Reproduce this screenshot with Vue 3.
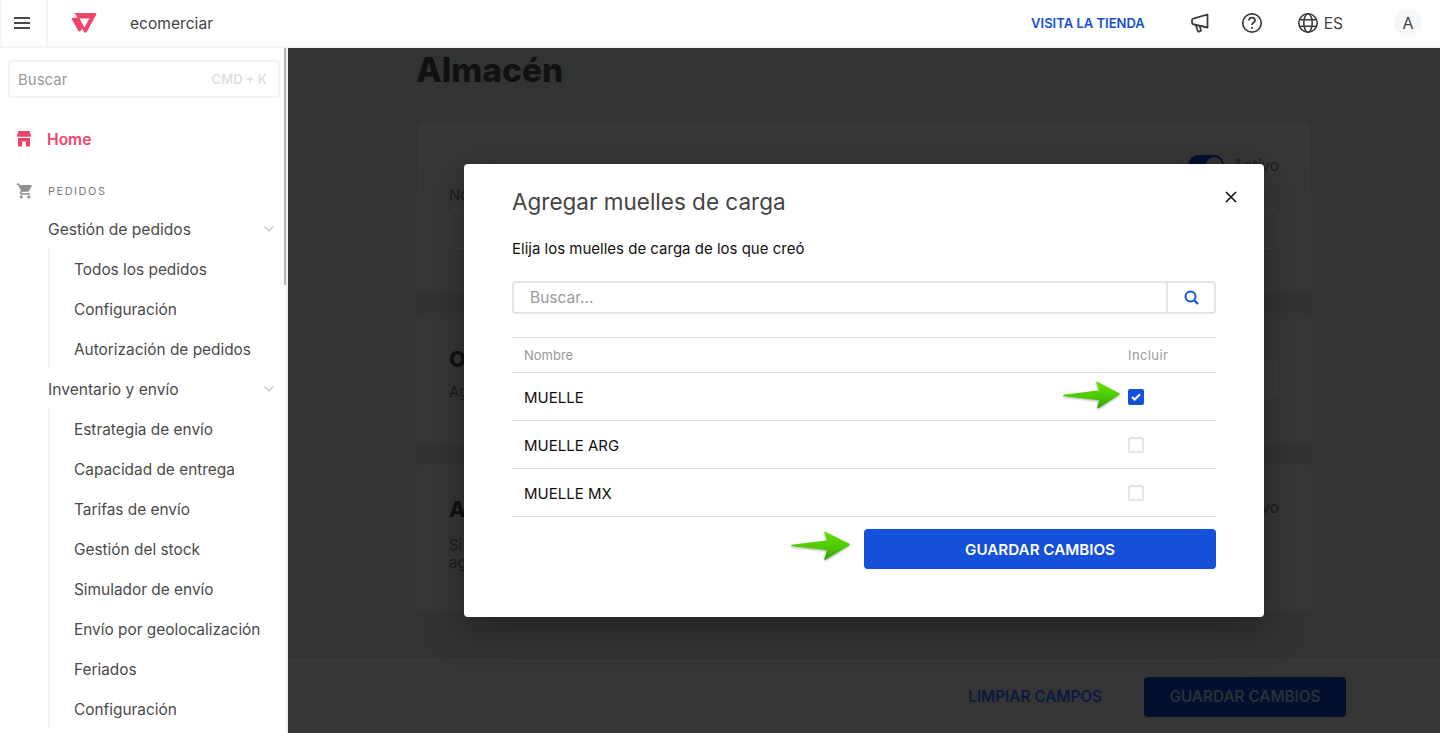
<script setup>
const gestion = ['Todos los pedidos', 'Configuración', 'Autorización de pedidos']
const inventario = ['Estrategia de envío', 'Capacidad de entrega', 'Tarifas de envío', 'Gestión del stock', 'Simulador de envío', 'Envío por geolocalización', 'Feriados', 'Configuración']
const rows = [
  { name: 'MUELLE', checked: true },
  { name: 'MUELLE ARG', checked: false },
  { name: 'MUELLE MX', checked: false }
]
</script>

<template>
  <div class="app">
    <header class="topbar">
      <div class="burger">
        <svg width="18" height="14" viewBox="0 0 18 14"><path d="M1 2h16M1 7h16M1 12h16" stroke="#4a4a4a" stroke-width="2" fill="none" /></svg>
      </div>
      <svg class="logo" width="26" height="22" viewBox="0 0 26 22">
        <path fill="#f0456a" fill-rule="evenodd" d="M3.500 1h20.800c.9 0 1.400.8 1 1.600L15.700 20c-.6 1.100-2 1.100-2.600 0L11 16.400l-1.300 2.300c-.6 1-1.900 1-2.500 0L1 7.600c-.5-.9.100-1.800 1-1.800h4.500L3.500 1zM8.500 6.500 13.500 15.500 18.300 6.500z" />
      </svg>
      <span class="brand">ecomerciar</span>
      <span class="spacer"></span>
      <a class="visit">VISITA LA TIENDA</a>
      <svg class="i-mega" width="18" height="20" viewBox="0 0 18 20" fill="none" stroke="#3c3c3c" stroke-width="1.800" stroke-linejoin="round">
        <path d="M1 7C1 6 2 5.500 3 5.300L16.500 1.500V14.500L3 11.500C2 11.300 1 10.500 1 9.500z" />
        <path d="M5 12l1.500 5.500c.3 1 1.200 1.300 2 .9l1.500-.8-1.300-4.500" />
      </svg>
      <svg class="i-help" width="22" height="22" viewBox="0 0 22 22" fill="none" stroke="#3c3c3c">
        <circle cx="11" cy="11" r="9.200" stroke-width="1.700" />
        <path d="M8 8.600c0-1.800 1.400-2.900 3-2.900s3 1.100 3 2.700c0 2.300-3 2.400-3 4.600" stroke-width="1.800" />
        <path d="M11 15v1.800" stroke-width="1.900" />
      </svg>
      <svg class="i-globe" width="22" height="22" viewBox="0 0 22 22" fill="none" stroke="#3c3c3c" stroke-width="1.600">
        <circle cx="11" cy="11" r="9.200" />
        <ellipse cx="11" cy="11" rx="4.200" ry="9.200" />
        <path d="M2.300 7.800h17.400M2.300 14.200h17.400" />
      </svg>
      <span class="lang">ES</span>
      <span class="avatar">A</span>
    </header>

    <div class="body">
      <aside class="sidebar">
        <div class="search">
          <span>Buscar</span>
          <span class="kbd">CMD + K</span>
        </div>
        <div class="home">
          <svg width="16" height="16" viewBox="0 0 16 16"><path fill="#f0456a" d="M2.500 0h11l1.500 4.500v1.300H1V4.500zM2 7h12v8.500H9.800V10.500H6.200v5H2z" /></svg>
          <span>Home</span>
        </div>
        <div class="section">
          <svg width="18" height="18" viewBox="0 0 24 24"><path fill="#8f8f8f" d="M7 18c-1.100 0-1.990.9-1.990 2S5.900 22 7 22s2-.9 2-2-.9-2-2-2zM1 2v2h2l3.600 7.590-1.350 2.450c-.16.28-.25.61-.25.96 0 1.100.9 2 2 2h12v-2H7.420c-.14 0-.25-.11-.25-.25l.03-.12.9-1.630h7.450c.75 0 1.410-.41 1.750-1.030l3.580-6.490c.08-.14.12-.31.12-.48 0-.55-.45-1-1-1H5.210l-.94-2H1zm16 16c-1.100 0-1.990.9-1.990 2s.89 2 1.990 2 2-.9 2-2-.9-2-2-2z" /></svg>
          <span>PEDIDOS</span>
        </div>
        <div class="group">
          <span>Gestión de pedidos</span>
          <svg width="12" height="8" viewBox="0 0 12 8"><path d="M1.500 1.500 6 6l4.500-4.500" stroke="#c9c9c9" stroke-width="1.500" fill="none" /></svg>
        </div>
        <ul class="sub">
          <li v-for="item in gestion" :key="item">{{ item }}</li>
        </ul>
        <div class="group">
          <span>Inventario y envío</span>
          <svg width="12" height="8" viewBox="0 0 12 8"><path d="M1.500 1.500 6 6l4.500-4.500" stroke="#c9c9c9" stroke-width="1.500" fill="none" /></svg>
        </div>
        <ul class="sub">
          <li v-for="item in inventario" :key="item">{{ item }}</li>
        </ul>
        <span class="thumb"></span>
      </aside>

      <main class="main">
        <div class="content">
          <h1>Almacén</h1>
          <section class="card card-a">
            <div class="switch-row">
              <span class="switch"><i></i></span>
              <span>Activo</span>
            </div>
            <label>No</label>
            <div class="field"></div>
          </section>
          <section class="card card-b">
            <h2>O</h2>
            <p>Ag</p>
            <span class="ghost"></span>
          </section>
          <section class="card card-c">
            <div class="card-c-head">
              <h2>A</h2>
              <span class="tail">Activo</span>
            </div>
            <p>Si<br />ag</p>
          </section>
        </div>
        <footer class="footer">
          <a>LIMPIAR CAMPOS</a>
          <button>GUARDAR CAMBIOS</button>
        </footer>

        <div class="modal-layer">
          <div class="modal">
            <div class="modal-head">
              <h3>Agregar muelles de carga</h3>
              <svg width="12" height="12" viewBox="0 0 12 12"><path d="M1 1l10 10M11 1 1 11" stroke="#111" stroke-width="1.600" /></svg>
            </div>
            <p class="lead">Elija los muelles de carga de los que creó</p>
            <div class="finder">
              <span class="finder-text">Buscar...</span>
              <span class="finder-btn">
                <svg width="15" height="15" viewBox="0 0 15 15" fill="none" stroke="#1450d8"><circle cx="6.500" cy="6.500" r="5" stroke-width="1.900" /><path d="M10.500 10.500 14 14" stroke-width="2.200" /></svg>
              </span>
            </div>
            <div class="table">
              <div class="thead">
                <span>Nombre</span>
                <span class="col-inc">Incluir</span>
              </div>
              <div v-for="r in rows" :key="r.name" class="row">
                <span>{{ r.name }}</span>
                <span class="col-box">
                  <span :class="['box', { on: r.checked }]">
                    <svg v-if="r.checked" width="10" height="8" viewBox="0 0 10 8"><path d="M1 4l2.700 2.500L9 1.300" stroke="#fff" stroke-width="2" fill="none" /></svg>
                  </span>
                </span>
              </div>
            </div>
            <div class="actions">
              <button>GUARDAR CAMBIOS</button>
            </div>
          </div>
        </div>

        <svg class="arrow arrow-a" width="62" height="36" viewBox="0 0 62 36">
          <defs>
            <linearGradient id="gr" x1="0" y1="0" x2="0" y2="1">
              <stop offset="0" stop-color="#62e002" />
              <stop offset="0.6" stop-color="#4cc804" />
              <stop offset="1" stop-color="#3a9a0a" />
            </linearGradient>
            <filter id="sh" x="-20%" y="-20%" width="140%" height="150%">
              <feDropShadow dx="0" dy="1" stdDeviation="0.800" flood-color="#000" flood-opacity="0.350" />
            </filter>
          </defs>
          <path fill="url(#gr)" filter="url(#sh)" stroke="url(#gr)" stroke-width="1.500" stroke-linejoin="round" d="M2 17.500 38 13 35 4.500 57 16 36 29.500 38 21.500z" />
        </svg>
        <svg class="arrow arrow-b" width="62" height="36" viewBox="0 0 62 36">
          <path fill="url(#gr)" filter="url(#sh)" stroke="url(#gr)" stroke-width="1.500" stroke-linejoin="round" d="M2 17.500 38 13 35 4.500 59 16.500 35 31 38 21.500z" />
        </svg>
      </main>
    </div>
  </div>
</template>

<style>
html, body { margin: 0; padding: 0; overflow: hidden; }
</style>

<style scoped>
* { box-sizing: border-box; }
.app {
  width: 1440px;
  height: 733px;
  overflow: hidden;
  font-family: Inter, "Liberation Sans", sans-serif;
  font-size: 15.600px;
  color: #4a4a4a;
  background: #fff;
  display: flex;
  flex-direction: column;
}
.topbar {
  height: 48px;
  flex: none;
  display: flex;
  align-items: center;
  background: #fff;
  border-bottom: 2px solid #f4f4f4;
}
.burger {
  width: 48px;
  height: 46px;
  border-left: 2px solid #f6f6f6;
  border-right: 2px solid #f4f4f4;
  display: flex;
  align-items: center;
  justify-content: center;
  padding-right: 4px;
}
.logo { margin-left: 23px; }
.brand { margin-left: 33px; color: #444; font-size: 15.600px; }
.spacer { flex: 1; }
.visit { color: #1450d8; font-size: 13px; font-weight: 600; }
.i-mega { margin-left: 46px; }
.i-help { margin-left: 32px; }
.i-globe { margin-left: 34px; }
.lang { margin-left: 5px; color: #444; font-size: 15.500px; }
.avatar {
  width: 28px;
  height: 28px;
  margin: 0 18px 0 51px;
  border-radius: 50%;
  background: #f6f7f9;
  color: #444;
  font-size: 16px;
  display: flex;
  align-items: center;
  justify-content: center;
}
.body { flex: 1; display: flex; min-height: 0; }
.sidebar {
  position: relative;
  width: 288px;
  flex: none;
  overflow: hidden;
  background: #fff;
  padding: 12px 8px 0;
  border-right: 2px solid #eee;
}
.thumb {
  position: absolute;
  right: 0;
  top: 0;
  width: 2px;
  height: 237px;
  background: #b5b5b5;
}
.search {
  height: 38px;
  width: 272px;
  border: 2px solid #f3f3f3;
  border-radius: 4px;
  display: flex;
  align-items: center;
  justify-content: space-between;
  padding: 0 11px 0 8px;
  color: #9a9a9a;
  font-size: 15px;
}
.kbd { color: #dfdfdf; font-size: 13px; font-weight: 600; }
.home {
  display: flex;
  align-items: center;
  gap: 15px;
  margin-top: 31px;
  padding-left: 8px;
  height: 20px;
  color: #f0456a;
  font-weight: 600;
  font-size: 15.600px;
}
.section {
  display: flex;
  align-items: center;
  gap: 14px;
  margin-top: 32px;
  padding-left: 8px;
  height: 20px;
  color: #7d7d7d;
  font-size: 11px;
  letter-spacing: 1.500px;
}
.group {
  height: 40px;
  margin-top: 8px;
  padding: 0 3px 0 40px;
  display: flex;
  align-items: center;
  justify-content: space-between;
}
.sub + .group { margin-top: 0; }
.sub {
  list-style: none;
  margin: 0 0 0 40px;
  padding: 0 0 0 24px;
  border-left: 2px solid #f2f2f2;
}
.sub li { height: 40px; line-height: 41px; font-size: 15.400px; white-space: nowrap; }

.main {
  position: relative;
  flex: 1;
  min-width: 0;
  overflow: hidden;
  background: #323433;
  display: flex;
  flex-direction: column;
}
.content { flex: 1; min-height: 0; overflow: hidden; padding: 0 128px; }
h1 {
  margin: 2px 0 32px;
  height: 40px;
  color: #111;
  font-size: 33.500px;
  line-height: 40px;
  font-weight: 800;
}
.card {
  background: #363636;
  border: 1px solid #313332;
  border-radius: 8px;
  padding: 0 32px;
  color: #1d1d1d;
  position: relative;
}
.card-a { height: 172px; padding-top: 30px; margin-bottom: 18px; }
.switch-row { display: flex; justify-content: flex-end; align-items: center; gap: 9px; height: 24px; font-size: 15.600px; }
.switch { position: relative; width: 36px; height: 20px; border-radius: 10px; background: #030f2f; }
.switch i { position: absolute; right: 2px; top: 2px; width: 16px; height: 16px; border-radius: 50%; background: #333; }
.card-a label { display: block; margin-top: 8px; font-size: 15px; }
.field { height: 40px; margin-top: 5px; border: 1px solid #3f3f3f; background: #393939; border-radius: 4px; }
.card-b { height: 134px; padding-top: 32px; margin-bottom: 16px; }
.card h2 { margin: 0; font-size: 22px; line-height: 28px; font-weight: 800; color: #111; }
.card p { margin: 10px 0 0; font-size: 15px; line-height: 18px; }
.ghost { position: absolute; right: 32px; top: 46px; width: 60px; height: 40px; background: #3a3a3a; border-radius: 4px; }
.card-c { height: 152px; padding-top: 32px; }
.card-c p { margin-top: 13px; }
.card-c-head { display: flex; justify-content: space-between; align-items: flex-start; }
.tail { font-size: 15.600px; margin-top: 3px; }
.footer {
  flex: none;
  height: 73px;
  background: #353535;
  border-top: 1px solid #3b3b3b;
  display: flex;
  align-items: center;
  justify-content: flex-end;
  gap: 42px;
  padding: 0 94px 1px 0;
  font-size: 15.300px;
  font-weight: 600;
}
.footer a { color: #0b1a3f; }
.footer button {
  width: 202px;
  height: 40px;
  border: 0;
  border-radius: 4px;
  background: #030f2f;
  color: #2a2f3b;
  font: inherit;
}

.modal-layer {
  position: absolute;
  inset: 0;
  display: flex;
  align-items: center;
  justify-content: center;
}
.modal {
  width: 800px;
  height: 453px;
  background: #fff;
  border-radius: 4px;
  padding: 24px 48px 48px;
  box-shadow: 0 12px 40px rgba(0, 0, 0, 0.35);
}
.modal-head { display: flex; align-items: center; justify-content: space-between; height: 28px; margin-right: -21px; }
.modal-head h3 { margin: 0 0 2px; font-size: 22.500px; font-weight: 400; color: #444; }
.modal-head svg { margin-bottom: 10px; }
.lead { margin: 21px 0 0; height: 24px; line-height: 24px; color: #111; font-size: 15px; font-weight: 400; }
.finder {
  margin-top: 20px;
  height: 33px;
  border: 2px solid #e4e4e4;
  border-radius: 4px;
  display: flex;
  align-items: center;
}
.finder-text { flex: 1; padding-left: 16px; color: #999; font-size: 15.500px; }
.finder-btn {
  width: 48px;
  height: 100%;
  border-left: 2px solid #e4e4e4;
  display: flex;
  align-items: center;
  justify-content: center;
}
.table { margin-top: 23px; border-top: 1px solid #e2e2e2; }
.thead, .row {
  display: flex;
  align-items: center;
  justify-content: space-between;
  padding: 0 12px;
  border-bottom: 1px solid #e2e2e2;
}
.thead { height: 35px; color: #9a9a9a; font-size: 13px; }
.col-inc { width: 88px; margin-right: -12px; letter-spacing: 0.400px; }
.row { height: 48px; color: #111; font-size: 15px; padding-top: 1px; }
.col-box { width: 88px; margin-right: -12px; margin-top: -1px; }
.box {
  width: 16px;
  height: 16px;
  border: 2px solid #e4e4e4;
  border-radius: 2px;
  display: flex;
  align-items: center;
  justify-content: center;
}
.box.on { background: #1450d8; border-color: #1450d8; }
.actions { margin-top: 12px; display: flex; justify-content: flex-end; }
.actions button {
  width: 352px;
  height: 40px;
  border: 0;
  border-radius: 4px;
  background: #1450d8;
  color: #fff;
  font: 600 15.200px Inter, "Liberation Sans", sans-serif;
}
.arrow { position: absolute; }
.arrow-a { left: 774px; top: 330px; }
.arrow-b { left: 502px; top: 480px; }
</style>
